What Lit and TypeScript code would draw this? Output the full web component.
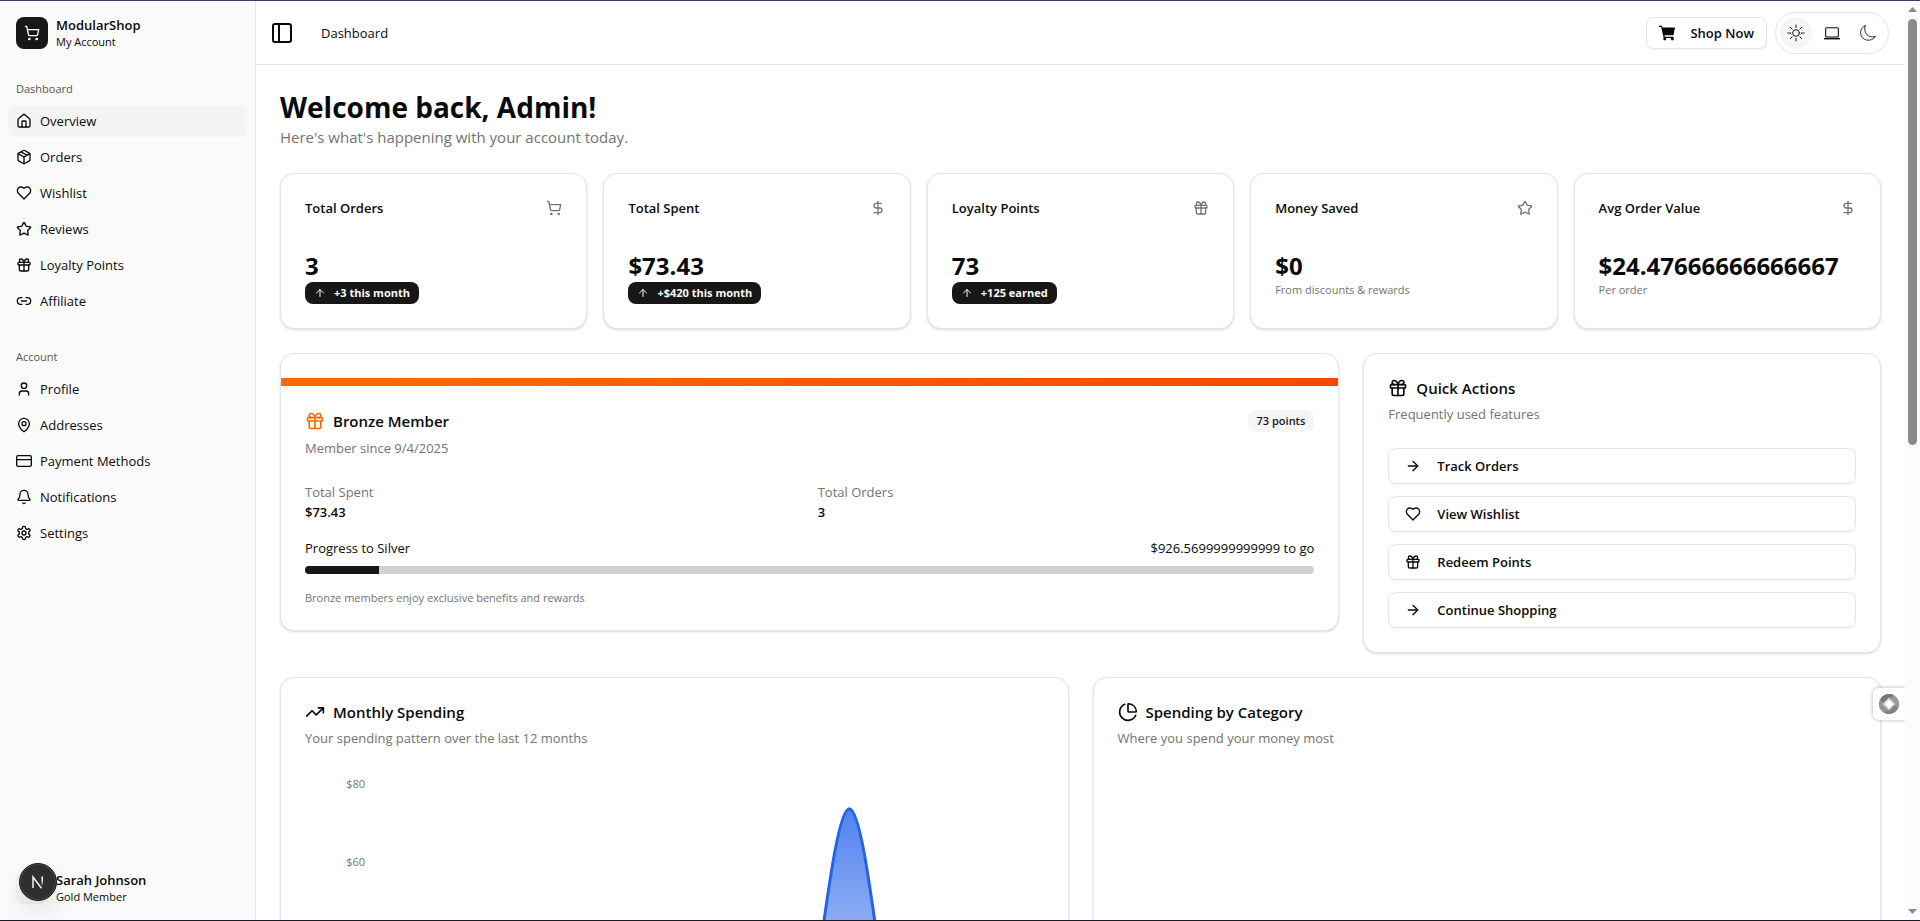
import { LitElement, html, svg, css, nothing, type SVGTemplateResult } from "lit";
import { customElement, property } from "lit/decorators.js";

const ICONS: Record<string, SVGTemplateResult> = {
  cart: svg`<circle cx="8" cy="21" r="1"/><circle cx="19" cy="21" r="1"/><path d="M2.05 2.05h2l2.66 12.42a2 2 0 0 0 2 1.58h9.78a2 2 0 0 0 1.95-1.57l1.65-7.43H5.12"/>`,
  home: svg`<path d="M15 21v-8a1 1 0 0 0-1-1h-4a1 1 0 0 0-1 1v8"/><path d="M3 10a2 2 0 0 1 .709-1.528l7-5.999a2 2 0 0 1 2.582 0l7 5.999A2 2 0 0 1 21 10v9a2 2 0 0 1-2 2H5a2 2 0 0 1-2-2z"/>`,
  package: svg`<path d="M11 21.73a2 2 0 0 0 2 0l7-4A2 2 0 0 0 21 16V8a2 2 0 0 0-1-1.73l-7-4a2 2 0 0 0-2 0l-7 4A2 2 0 0 0 3 8v8a2 2 0 0 0 1 1.73z"/><path d="M12 22V12"/><path d="M3.29 7 12 12l8.71-5"/><path d="m7.5 4.27 9 5.15"/>`,
  heart: svg`<path d="M19 14c1.49-1.46 3-3.21 3-5.5A5.5 5.5 0 0 0 16.5 3c-1.76 0-3 .5-4.5 2-1.5-1.5-2.74-2-4.5-2A5.5 5.5 0 0 0 2 8.5c0 2.3 1.5 4.05 3 5.5l7 7Z"/>`,
  star: svg`<path d="M11.525 2.295a.53.53 0 0 1 .95 0l2.31 4.679a2.123 2.123 0 0 0 1.595 1.16l5.166.756a.53.53 0 0 1 .294.904l-3.736 3.638a2.123 2.123 0 0 0-.611 1.878l.882 5.14a.53.53 0 0 1-.771.56l-4.618-2.428a2.122 2.122 0 0 0-1.973 0L6.396 21.01a.53.53 0 0 1-.77-.56l.881-5.139a2.122 2.122 0 0 0-.611-1.879L2.16 9.795a.53.53 0 0 1 .294-.906l5.165-.755a2.122 2.122 0 0 0 1.597-1.16z"/>`,
  gift: svg`<rect x="3" y="8" width="18" height="4" rx="1"/><path d="M12 8v13"/><path d="M19 12v7a2 2 0 0 1-2 2H7a2 2 0 0 1-2-2v-7"/><path d="M7.5 8a2.5 2.5 0 0 1 0-5A4.8 8 0 0 1 12 8a4.8 8 0 0 1 4.5-5 2.5 2.5 0 0 1 0 5"/>`,
  link: svg`<path d="M9 17H7A5 5 0 0 1 7 7h2"/><path d="M15 7h2a5 5 0 1 1 0 10h-2"/><path d="M8 12h8"/>`,
  user: svg`<path d="M19 21v-2a4 4 0 0 0-4-4H9a4 4 0 0 0-4 4v2"/><circle cx="12" cy="7" r="4"/>`,
  pin: svg`<path d="M20 10c0 4.993-5.539 10.193-7.399 11.799a1 1 0 0 1-1.202 0C9.539 20.193 4 14.993 4 10a8 8 0 0 1 16 0"/><circle cx="12" cy="10" r="3"/>`,
  card: svg`<rect x="1" y="4" width="22" height="16" rx="2"/><path d="M1 10h22"/>`,
  bell: svg`<path d="M10.268 21a2 2 0 0 0 3.464 0"/><path d="M3.262 15.326A1 1 0 0 0 4 17h16a1 1 0 0 0 .74-1.673C19.41 13.956 18 12.499 18 8A6 6 0 0 0 6 8c0 4.499-1.411 5.956-2.738 7.326"/>`,
  settings: svg`<path d="M12.22 2h-.44a2 2 0 0 0-2 2v.18a2 2 0 0 1-1 1.73l-.43.25a2 2 0 0 1-2 0l-.15-.08a2 2 0 0 0-2.73.73l-.22.38a2 2 0 0 0 .73 2.73l.15.1a2 2 0 0 1 1 1.72v.51a2 2 0 0 1-1 1.74l-.15.09a2 2 0 0 0-.73 2.73l.22.38a2 2 0 0 0 2.73.73l.15-.08a2 2 0 0 1 2 0l.43.25a2 2 0 0 1 1 1.73V20a2 2 0 0 0 2 2h.44a2 2 0 0 0 2-2v-.18a2 2 0 0 1 1-1.73l.43-.25a2 2 0 0 1 2 0l.15.08a2 2 0 0 0 2.73-.73l.22-.39a2 2 0 0 0-.73-2.73l-.15-.08a2 2 0 0 1-1-1.74v-.5a2 2 0 0 1 1-1.74l.15-.09a2 2 0 0 0 .73-2.73l-.22-.38a2 2 0 0 0-2.73-.73l-.15.08a2 2 0 0 1-2 0l-.43-.25a2 2 0 0 1-1-1.73V4a2 2 0 0 0-2-2z"/><circle cx="12" cy="12" r="3"/>`,
  panel: svg`<rect x="3" y="3" width="18" height="18" rx="2"/><path d="M9 3v18"/>`,
  dollar: svg`<path d="M12 2v20"/><path d="M17 5H9.5a3.5 3.5 0 0 0 0 7h5a3.5 3.5 0 0 1 0 7H6"/>`,
  up: svg`<path d="m5 12 7-7 7 7"/><path d="M12 19V5"/>`,
  right: svg`<path d="M5 12h14"/><path d="m12 5 7 7-7 7"/>`,
  trend: svg`<path d="M16 7h6v6"/><path d="m22 7-8.5 8.5-5-5L2 17"/>`,
  pie: svg`<path d="M21 12c.552 0 1.005-.449.95-.998a10 10 0 0 0-8.953-8.951c-.55-.055-.998.398-.998.95v8a1 1 0 0 0 1 1z"/><path d="M21.21 15.89A10 10 0 1 1 8 2.83"/>`,
  cartFill: svg`<path fill="currentColor" stroke="none" d="M0 1h4.6l.7 2.6H24l-2.2 11.6H8.2l.5 2.4h13.1v2H7L3.2 3H0z"/><circle cx="8.6" cy="21" r="2.2" fill="currentColor" stroke="none"/><circle cx="20" cy="21" r="2.2" fill="currentColor" stroke="none"/>`,
  sun: svg`<g stroke-width="1.4"><circle cx="12" cy="12" r="5"/><path d="M12 0v4M12 20v4M0 12h4M20 12h4M3.5 3.5l2.8 2.8M17.7 17.7l2.8 2.8M3.5 20.5l2.8-2.8M17.7 6.3l2.8-2.8"/></g>`,
  laptop: svg`<g stroke-width="1.6"><rect x="2.5" y="4" width="19" height="14" rx="1.5"/><path d="M0 20.5h24" stroke-width="2.2" stroke-linecap="butt"/></g>`,
  moon: svg`<path stroke-width="1.3" d="M7.8 .8C4.200 11.500 12.500 20.500 23.200 17.200C17.500 26.300 1.500 24.300 .9 11.800C.8 6.800 3.500 2.800 7.800 .8z"/>`,
};

@customElement("ui-icon")
class UiIcon extends LitElement {
  @property() name = "";
  static styles = css`
    :host { display: inline-flex; flex: none; width: 16px; height: 16px; }
    svg { width: 100%; height: 100%; overflow: visible; }
  `;
  render() {
    return html`<svg viewBox="0 0 24 24" fill="none" stroke="currentColor" stroke-width="2" stroke-linecap="round" stroke-linejoin="round" aria-hidden="true">${ICONS[this.name]}</svg>`;
  }
}

const MAIN_NAV = [
  ["home", "Overview"], ["package", "Orders"], ["heart", "Wishlist"],
  ["star", "Reviews"], ["gift", "Loyalty Points"], ["link", "Affiliate"],
];
const ACCOUNT_NAV = [
  ["user", "Profile"], ["pin", "Addresses"], ["card", "Payment Methods"],
  ["bell", "Notifications"], ["settings", "Settings"],
];
const STATS = [
  { label: "Total Orders", icon: "cart", value: "3", change: "+3 this month" },
  { label: "Total Spent", icon: "dollar", value: "$73.43", change: "+$420 this month" },
  { label: "Loyalty Points", icon: "gift", value: "73", change: "+125 earned" },
  { label: "Money Saved", icon: "star", value: "$0", note: "From discounts & rewards" },
  { label: "Avg Order Value", icon: "dollar", value: "$24.47666666666667", note: "Per order" },
];
const ACTIONS = [
  ["right", "Track Orders"], ["heart", "View Wishlist"],
  ["gift", "Redeem Points"], ["right", "Continue Shopping"],
];
const MONTHLY = [0, 0, 0, 0, 0, 0, 0, 0, 73.43, 0, 0, 0];
const SPENT = 73.43;
const SILVER_AT = 1000;

@customElement("spending-chart")
class SpendingChart extends LitElement {
  static styles = css`
    :host { display: block; }
    svg { display: block; width: 100%; overflow: visible; }
    text { font-size: 11px; fill: #737373; text-anchor: end; }
    .area { fill: url(#spend); }
    .line { fill: none; stroke: #2563eb; stroke-width: 3; }
  `;
  render() {
    const left = 68, step = 59.5, base = 323, unit = 3.9;
    const points = MONTHLY.map((v, i) => [left + i * step, base - v * unit]);
    // Flat tangents at every month keep the curve from overshooting zero.
    const line = points.slice(1).reduce((d, [x, y], i) => {
      const [px, py] = points[i];
      return `${d}C${px + step / 3},${py} ${x - step / 3},${y} ${x},${y}`;
    }, `M${points[0][0]},${points[0][1]}`);
    return html`<svg viewBox="0 0 738 350" role="img" aria-label="Monthly spending">
      <defs>
        <linearGradient id="spend" x1="0" y1="0" x2="0" y2="1">
          <stop offset="0" stop-color="#2563eb" stop-opacity="0.8"/>
          <stop offset="1" stop-color="#2563eb" stop-opacity="0.1"/>
        </linearGradient>
      </defs>
      ${[80, 60, 40, 20, 0].map((v) => svg`<text x="60" y=${base - v * unit + 5}>$${v}</text>`)}
      <path class="area" d="${line}Z"/>
      <path class="line" d=${line}/>
    </svg>`;
  }
}

@customElement("app-root")
class AppRoot extends LitElement {
  static styles = css`
    :host {
      display: flex; flex-direction: column; height: 100vh; overflow: hidden;
      box-sizing: border-box; border-top: 1px solid #3d3a66; border-bottom: 1px solid #1c1b22;
      background: #fff; color: #0a0a0a;
      font-family: "Open Sans", "Noto Sans", sans-serif; font-size: 13px; line-height: 20px;
    }
    *, *::before, *::after { box-sizing: border-box; }
    h1, h2, h3, p, ul, dl, dd { margin: 0; padding: 0; }
    button { font: inherit; color: inherit; cursor: pointer; }
    a { color: inherit; text-decoration: none; }
    .shell { display: flex; flex: 1; min-height: 0; }

    .sidebar { width: 256px; flex: none; display: flex; flex-direction: column; background: #fafafa; border-right: 1px solid #e5e5e5; }
    .identity { display: flex; align-items: center; gap: 8px; height: 64px; padding: 0 16px; }
    .logo { display: grid; place-items: center; width: 32px; height: 32px; border-radius: 8px; background: #171717; color: #fafafa; }
    .who { display: flex; flex-direction: column; }
    .who strong { font-weight: 600; line-height: 18px; }
    .who span { font-size: 11px; line-height: 16px; }
    .groups { display: flex; flex-direction: column; gap: 8px; }
    .group { padding: 8px; }
    .group h2 { height: 32px; padding: 0 8px; font-size: 11px; line-height: 32px; font-weight: 500; color: #565656; }
    .group ul { list-style: none; display: flex; flex-direction: column; gap: 4px; }
    .group a { display: flex; align-items: center; gap: 8px; height: 32px; padding: 0 8px; border-radius: 8px; }
    .group a.active { background: #f4f4f5; }
    .account { position: relative; margin-top: auto; padding: 0 16px; display: flex; align-items: center; gap: 8px; height: 64px; }
    .avatar { width: 32px; height: 32px; border-radius: 8px; background: #f1f1f1; }
    .dev { position: absolute; left: 19px; top: 7px; display: grid; place-items: center; width: 38px; height: 38px; padding: 0; border: 1px solid #1b1b1b; border-radius: 50%; background: #2e2e2e; box-shadow: inset 0 0 0 1px #484848, 0 12px 24px rgba(0,0,0,.08); }
    .dev svg { width: 14px; height: 14px; }

    .main { flex: 1; min-width: 0; display: flex; flex-direction: column; overflow: hidden; }
    .topbar { flex: none; display: flex; align-items: center; height: 64px; padding: 0 16px 0 14px; border-bottom: 1px solid #e5e5e5; }
    .toggle { display: flex; padding: 0; border: 0; background: none; }
    .toggle ui-icon { width: 24px; height: 24px; }
    .crumb { margin-left: 27px; }
    .tools { margin-left: auto; display: flex; align-items: center; gap: 8px; }
    .outline { display: flex; align-items: center; border: 1px solid #e5e5e5; border-radius: 8px; background: #fff; box-shadow: 0 1px 2px rgba(0,0,0,.05); font-weight: 600; }
    .shop { height: 32px; padding: 0 12px; gap: 15px; }
    .themes { display: flex; gap: 4px; padding: 4px; border: 1px solid #e5e5e5; border-radius: 24px; }
    .themes button { display: grid; place-items: center; width: 32px; height: 32px; padding: 0; border: 0; border-radius: 50%; background: none; }
    .themes button.on { background: #f5f5f5; }

    .content { flex: 1; min-height: 0; overflow-y: auto; scrollbar-width: none; padding: 24px; display: flex; flex-direction: column; gap: 24px; }
    .content > * { flex: none; }
    h1 { font-size: 28px; line-height: 36px; font-weight: 700; }
    .lead { font-size: 15px; line-height: 24px; color: #737373; }
    .card { min-width: 0; border: 1px solid #e5e5e5; border-radius: 14px; background: #fff; padding: 24px 0; box-shadow: 0 1px 3px rgba(0,0,0,.1), 0 1px 2px rgba(0,0,0,.06); }
    .pad { padding: 0 24px; }
    .stats { display: grid; grid-template-columns: repeat(5, 1fr); gap: 16px; }
    .stat { display: flex; flex-direction: column; align-items: flex-start; padding: 24px; }
    .stat header { display: flex; justify-content: space-between; align-items: center; width: 100%; margin-bottom: 32px; color: #737373; }
    .stat h3 { font-size: 13px; line-height: 20px; font-weight: 600; color: #0a0a0a; }
    .value { font-size: 24px; line-height: 32px; font-weight: 700; }
    .badge { display: flex; align-items: center; height: 22px; padding: 0 8px; border: 1px solid transparent; border-radius: 8px; background: #171717; color: #fafafa; font-size: 11px; font-weight: 700; white-space: nowrap; }
    .badge ui-icon { width: 12px; height: 12px; margin-right: 8px; }
    .badge.soft { background: #f5f5f5; color: #171717; font-weight: 600; }
    .small { font-size: 11px; line-height: 16px; color: #737373; }

    .split { display: grid; grid-template-columns: repeat(3, 1fr); gap: 24px; align-items: start; }
    .wide { grid-column: span 2; }
    .halves { display: grid; grid-template-columns: repeat(2, 1fr); gap: 24px; }
    .strip { height: 8px; margin-bottom: 24px; background: linear-gradient(90deg, #ff6900, #f54900); }
    .title { display: flex; align-items: center; gap: 8px; height: 20px; }
    .title ui-icon { width: 20px; height: 20px; }
    .title h2 { font-size: 15px; line-height: 20px; font-weight: 600; }
    .title .badge { margin-left: auto; }
    .title ui-icon.bronze { color: #ff6900; }
    .desc { margin-top: 6px; margin-bottom: 24px; color: #737373; }
    .wide .title { height: 22px; }
    .facts { display: grid; grid-template-columns: 1fr 1fr; gap: 16px; }
    .facts dt { color: #737373; }
    .facts dd { font-weight: 600; }
    .goal { display: flex; justify-content: space-between; margin: 16px 0 8px; }
    .bar { height: 8px; margin-bottom: 16px; border-radius: 4px; background: #d1d1d1; overflow: hidden; }
    .fill { height: 100%; background: #171717; }
    .actions { display: flex; flex-direction: column; gap: 12px; }
    .actions .outline { height: 36px; padding: 0 16px; gap: 16px; }

    .scroll { flex: none; width: 15px; display: flex; flex-direction: column; align-items: center; background: #fcfcfc; padding: 6px 0; gap: 7px; }
    .scroll svg { width: 9px; height: 5px; flex: none; }
    .thumb { width: 9px; flex: 0 0 47%; border-radius: 5px; background: #8b8b8b; }
    .scroll svg:last-child { margin-top: auto; }
    .widget { position: absolute; right: 15px; top: 688px; display: grid; place-items: center; width: 32px; height: 32px; padding: 0; border: 0; border-radius: 6px 0 0 6px; background: #fff; box-shadow: 0 0 4px rgba(0,0,0,.3); clip-path: inset(-6px 0 -6px -6px); }
    .widget svg { width: 20px; height: 20px; }
  `;

  private nav(label: string, items: string[][]) {
    return html`<nav class="group" aria-label=${label}>
      <h2>${label}</h2>
      <ul>${items.map(([icon, text]) => html`<li><a href="#" class=${text === "Overview" ? "active" : ""}><ui-icon name=${icon}></ui-icon>${text}</a></li>`)}</ul>
    </nav>`;
  }

  render() {
    return html`<div class="shell">
      <aside class="sidebar">
        <div class="identity">
          <div class="logo"><ui-icon name="cart"></ui-icon></div>
          <div class="who"><strong>ModularShop</strong><span>My Account</span></div>
        </div>
        <div class="groups">${this.nav("Dashboard", MAIN_NAV)}${this.nav("Account", ACCOUNT_NAV)}</div>
        <div class="account">
          <div class="avatar"></div>
          <div class="who"><strong>Sarah Johnson</strong><span>Gold Member</span></div>
          <button class="dev" aria-label="Developer tools">
            <svg viewBox="0 0 14 14" fill="none" stroke-width="1.5">
              <defs><linearGradient id="fade" x1="0" y1="0" x2="0" y2="1"><stop offset=".4" stop-color="#fff"/><stop offset="1" stop-color="#fff" stop-opacity=".15"/></linearGradient></defs>
              <path d="M2 13V2l8.5 11.2" stroke="#f4f4f4"/>
              <rect x="10.5" y="1.5" width="1.5" height="9" fill="url(#fade)"/>
            </svg>
          </button>
        </div>
      </aside>
      <main class="main">
        <header class="topbar">
          <button class="toggle" aria-label="Toggle sidebar"><ui-icon name="panel"></ui-icon></button>
          <span class="crumb">Dashboard</span>
          <div class="tools">
            <button class="outline shop"><ui-icon name="cartFill"></ui-icon>Shop Now</button>
            <div class="themes">
              <button class="on" aria-label="Light theme"><ui-icon name="sun"></ui-icon></button>
              <button aria-label="System theme"><ui-icon name="laptop"></ui-icon></button>
              <button aria-label="Dark theme"><ui-icon name="moon"></ui-icon></button>
            </div>
          </div>
        </header>
        <div class="content">
          <div><h1>Welcome back, Admin!</h1><p class="lead">Here's what's happening with your account today.</p></div>
          <section class="stats">
            ${STATS.map((s) => html`<article class="card stat">
              <header><h3>${s.label}</h3><ui-icon name=${s.icon}></ui-icon></header>
              <div class="value">${s.value}</div>
              ${s.change ? html`<span class="badge"><ui-icon name="up"></ui-icon>${s.change}</span>` : nothing}
              ${s.note ? html`<p class="small">${s.note}</p>` : nothing}
            </article>`)}
          </section>
          <section class="split">
            <article class="card wide">
              <div class="strip"></div>
              <div class="pad">
                <div class="title"><ui-icon class="bronze" name="gift"></ui-icon><h2>Bronze Member</h2><span class="badge soft">73 points</span></div>
                <p class="desc">Member since 9/4/2025</p>
                <dl class="facts">
                  <div><dt>Total Spent</dt><dd>$73.43</dd></div>
                  <div><dt>Total Orders</dt><dd>3</dd></div>
                </dl>
                <div class="goal"><span id="goal">Progress to Silver</span><span>$926.5699999999999 to go</span></div>
                <div class="bar" role="progressbar" aria-labelledby="goal" aria-valuenow=${SPENT} aria-valuemax=${SILVER_AT}>
                  <div class="fill" style="width:${(SPENT / SILVER_AT) * 100}%"></div>
                </div>
                <p class="small">Bronze members enjoy exclusive benefits and rewards</p>
              </div>
            </article>
            <article class="card">
              <div class="pad">
                <div class="title"><ui-icon name="gift"></ui-icon><h2>Quick Actions</h2></div>
                <p class="desc">Frequently used features</p>
                <div class="actions">${ACTIONS.map(([icon, text]) => html`<button class="outline"><ui-icon name=${icon}></ui-icon>${text}</button>`)}</div>
              </div>
            </article>
          </section>
          <section class="halves">
            <article class="card">
              <div class="pad">
                <div class="title"><ui-icon name="trend"></ui-icon><h2>Monthly Spending</h2></div>
                <p class="desc">Your spending pattern over the last 12 months</p>
                <spending-chart></spending-chart>
              </div>
            </article>
            <article class="card">
              <div class="pad">
                <div class="title"><ui-icon name="pie"></ui-icon><h2>Spending by Category</h2></div>
                <p class="desc">Where you spend your money most</p>
              </div>
            </article>
          </section>
        </div>
      </main>
      <div class="scroll" aria-hidden="true">
        <svg viewBox="0 0 9 5"><path d="M0 5 4.5 0 9 5z" fill="#8b8b8b"/></svg>
        <div class="thumb"></div>
        <svg viewBox="0 0 9 5"><path d="M0 0 4.5 5 9 0z" fill="#8b8b8b"/></svg>
      </div>
      <button class="widget" aria-label="Open assistant">
        <svg viewBox="0 0 20 20">
          <circle cx="10" cy="10" r="10" fill="#8a8a8a"/>
          <path d="M10 5.5 14.45 1.05A10 10 0 0 1 18.95 14.45L14.5 10z" fill="#9a9a9a"/>
          <path d="M14.5 10 18.95 14.45A10 10 0 0 1 5.55 18.95L10 14.5z" fill="#808080"/>
          <path d="M10 14.5 5.55 18.95A10 10 0 0 1 1.05 5.55L5.5 10z" fill="#949494"/>
          <path d="M5.5 10 1.05 5.55A10 10 0 0 1 14.45 1.05L10 5.5z" fill="#767676"/>
          <path d="M10 3.2 16.8 10 10 16.8 3.2 10z" fill="#c4c4c4"/>
          <path d="M10 5.2 14.8 10 10 14.8 5.2 10z" fill="#fff"/>
        </svg>
      </button>
    </div>`;
  }
}
